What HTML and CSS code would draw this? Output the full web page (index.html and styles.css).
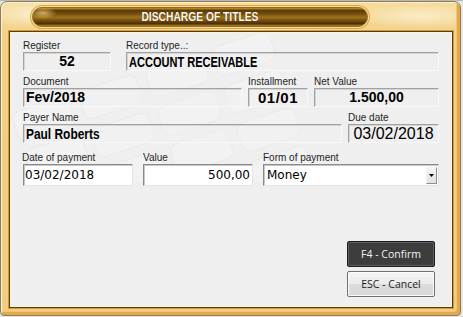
FILE: index.html
```html
<!DOCTYPE html>
<html>
<head>
<meta charset="utf-8">
<link rel="stylesheet" href="styles.css">
</head>
<body>
<div class="frame">
  <div class="titlebar">
    <div class="pill"><span class="title">DISCHARGE OF TITLES</span></div>
  </div>
  <div class="panel">
    <svg class="watermark" width="442" height="150" viewBox="0 0 442 150" aria-hidden="true">
      <g transform="rotate(-18 200 80)" fill="#f6f6f6" stroke="#e6e6e6" stroke-width="1">
        <rect x="10" y="20" width="60" height="30" rx="8"/>
        <rect x="80" y="20" width="60" height="30" rx="8"/>
        <rect x="150" y="20" width="60" height="30" rx="8"/>
        <rect x="220" y="20" width="60" height="30" rx="8"/>
        <rect x="10" y="60" width="60" height="30" rx="8"/>
        <rect x="80" y="60" width="60" height="30" rx="8"/>
        <rect x="150" y="60" width="60" height="30" rx="8"/>
        <rect x="220" y="60" width="60" height="30" rx="8"/>
        <rect x="10" y="100" width="60" height="30" rx="8"/>
        <rect x="80" y="100" width="60" height="30" rx="8"/>
        <rect x="150" y="100" width="60" height="30" rx="8"/>
        <rect x="220" y="100" width="60" height="30" rx="8"/>
        <rect x="10" y="140" width="60" height="30" rx="8"/>
        <rect x="80" y="140" width="60" height="30" rx="8"/>
        <rect x="150" y="140" width="60" height="30" rx="8"/>
        <rect x="220" y="140" width="60" height="30" rx="8"/>
      </g>
    </svg>
    <div class="content">
      <div class="row">
        <div class="field w88"><div class="lbl">Register</div><div class="ro bold center">52</div></div>
        <div class="field w313 g15"><div class="lbl">Record type..:</div><div class="ro"><span class="narrow n-caps">ACCOUNT RECEIVABLE</span></div></div>
      </div>
      <div class="row">
        <div class="field w219"><div class="lbl">Document</div><div class="ro bold">Fev/2018</div></div>
        <div class="field w60 g6"><div class="lbl">Installment</div><div class="ro bold wide center">01/01</div></div>
        <div class="field w125 g6"><div class="lbl">Net Value</div><div class="ro bold center">1.500,00</div></div>
      </div>
      <div class="row">
        <div class="field w319"><div class="lbl">Payer Name</div><div class="ro"><span class="narrow n-mixed">Paul Roberts</span></div></div>
        <div class="field w91 g6"><div class="lbl">Due date</div><div class="ro big center">03/02/2018</div></div>
      </div>
      <div class="row row4">
        <div class="field w110"><div class="lbl lbl-shift">Date of payment</div><div class="inp">03/02/2018</div></div>
        <div class="field w110 g10"><div class="lbl">Value</div><div class="inp right">500,00</div></div>
        <div class="field w176 g10"><div class="lbl">Form of payment</div>
          <div class="inp select"><span>Money</span><span class="drop"><svg width="5" height="3" viewBox="0 0 5 3"><path d="M0 0H5L2.5 3Z" fill="#000"/></svg></span></div>
        </div>
      </div>
      <div class="buttons">
        <div class="btn dark">F4 - Confirm</div>
        <div class="btn light">ESC - Cancel</div>
      </div>
    </div>
  </div>
</div>
</body>
</html>
```
FILE: styles.css
```css
html, body {
  margin: 0;
  padding: 0;
}
body {
  width: 463px;
  height: 317px;
  overflow: hidden;
  background: linear-gradient(180deg, #b8b8b8 0, #b8b8b8 1px, #e6e6e6 1px);
}
.frame {
  margin-top: 1px;
  width: 461px;
  height: 315px;
  box-sizing: border-box;
  border: 1px solid #8c7c5c;
  border-radius: 7px 7px 4px 4px;
  padding: 0 7px 0 8px;
  background:
    radial-gradient(ellipse 60px 14px at 40px 12px, rgba(255,250,235,0.7), rgba(255,250,235,0) 100%),
    radial-gradient(ellipse 70px 12px at 420px 14px, rgba(255,250,235,0.6), rgba(255,250,235,0) 100%),
    radial-gradient(ellipse 90px 10px at 250px 28px, rgba(255,248,225,0.5), rgba(255,248,225,0) 100%),
    linear-gradient(180deg, #f6dc9c 0%, #f2d088 12%, #f1cd82 100%);
  box-shadow:
    inset 1px 1px 0 #fdf0cc,
    inset -3px -3px 0 0 #e3a84a,
    inset -4px -4px 0 0 #f0c676;
}
.titlebar {
  height: 29px;
  box-sizing: border-box;
  padding-top: 5px;
  padding-left: 23px;
}
.pill {
  width: 336px;
  height: 20px;
  box-sizing: border-box;
  border-radius: 10px;
  border: 1px solid #9a6c1c;
  box-shadow: 0 0 0 1px #f7dc98, 0 0 0 2px #d9a74a;
  background:
    radial-gradient(ellipse 14px 6px at 10px 5px, rgba(250,215,130,0.7), rgba(250,215,130,0) 100%),
    linear-gradient(180deg, #c8962e 0%, #5a3a06 14%, #6e4a0e 30%, #9e721c 52%, #6e4a0e 72%, #4a2f04 88%, #b5842a 100%);
  display: flex;
  align-items: center;
  justify-content: center;
}
.title {
  display: inline-block;
  font-family: "Liberation Sans", Arial, sans-serif;
  font-weight: bold;
  font-size: 13px;
  line-height: 14px;
  color: #fbf8f0;
  text-shadow: 0 0 1px #4a3000;
  transform: scaleX(0.79);
  padding-left: 1px;
}
.panel {
  position: relative;
  width: 444px;
  height: 277px;
  box-sizing: border-box;
  border: 1px solid #5a3c0a;
  background: #efefef;
  box-shadow: 0 0 0 1px #d29c3c, inset 1px 1px 0 #fbf3df, inset -1px -1px 0 #fbf3df;
  overflow: hidden;
}
.watermark {
  position: absolute;
  left: 0;
  top: 0;
  opacity: 0.5;
}
.content {
  position: relative;
  padding: 7px 13px 0 13px;
  font-family: "Liberation Sans", Arial, sans-serif;
}
.row {
  display: flex;
  margin-bottom: 4px;
}
.row4 {
  margin-top: 8px;
}
.field {
  display: flex;
  flex-direction: column;
}
.w88 { width: 88px; }
.w313 { width: 313px; }
.w219 { width: 219px; }
.w60 { width: 60px; }
.w125 { width: 125px; }
.w319 { width: 319px; }
.w91 { width: 91px; }
.w110 { width: 110px; }
.w176 { width: 176px; }
.g15 { margin-left: 15px; }
.g6 { margin-left: 6px; }
.g10 { margin-left: 10px; }
.lbl {
  font-size: 10px;
  line-height: 13px;
  height: 13px;
  color: #1e1e1e;
  white-space: nowrap;
}
.lbl-shift {
  margin-left: -1px;
}
.ro {
  height: 19px;
  box-sizing: border-box;
  border: 1px solid;
  border-color: #a2a2a2 #f8f8f8 #f8f8f8 #a2a2a2;
  box-shadow: inset 1px 1px 0 #d4d4d4;
  background: rgba(240,240,240,0.35);
  line-height: 17px;
  padding: 0 2px;
  color: #000;
  white-space: nowrap;
  overflow: hidden;
}
.bold {
  font-weight: bold;
  font-size: 14px;
}
.wide {
  font-size: 15px;
  letter-spacing: 0.5px;
}
.narrow {
  display: inline-block;
  font-weight: bold;
  font-size: 15px;
  transform-origin: left center;
}
.n-caps {
  transform: scaleX(0.735);
}
.n-mixed {
  transform: scaleX(0.795);
}
.big {
  font-size: 16px;
}
.center {
  text-align: center;
}
.inp {
  height: 22px;
  box-sizing: border-box;
  border: 1px solid;
  border-color: #8a8a8a #e4e4e4 #e4e4e4 #8a8a8a;
  box-shadow: inset 1px 1px 0 #c8c8c8;
  background: #fff;
  font-family: "DejaVu Sans", Verdana, sans-serif;
  font-size: 12px;
  line-height: 20px;
  padding: 0 2px 0 1px;
  color: #000;
}
.right {
  text-align: right;
}
.select {
  display: flex;
  align-items: center;
  justify-content: space-between;
  padding: 0 1px 0 3px;
}
.drop {
  width: 11px;
  height: 17px;
  box-sizing: border-box;
  border: 1px solid;
  border-color: #f4f4f4 #8e8e8e #8e8e8e #f4f4f4;
  background: linear-gradient(180deg, #f4f4f4, #e2e2e2);
  display: flex;
  align-items: center;
  justify-content: center;
}
.drop svg {
  display: block;
}
.buttons {
  display: flex;
  flex-direction: column;
  align-items: flex-end;
  gap: 4px;
  margin-top: 55px;
  margin-right: 4px;
}
.btn {
  width: 88px;
  height: 26px;
  box-sizing: border-box;
  border-radius: 2px;
  font-family: "Open Sans", "Liberation Sans", sans-serif;
  font-size: 10.5px;
  line-height: 24px;
  text-align: center;
}
.dark {
  border: 1px solid #1c1c1c;
  background: #3d3d3d;
  box-shadow: inset 0 0 0 1px #5e5e5e;
  color: #f2f2f2;
}
.light {
  border: 1px solid #707070;
  background: linear-gradient(180deg, #f6f6f6 0%, #ebebeb 50%, #dddddd 51%, #d6d6d6 100%);
  box-shadow: inset 0 0 0 1px #fcfcfc;
  color: #1a1a1a;
}
```
